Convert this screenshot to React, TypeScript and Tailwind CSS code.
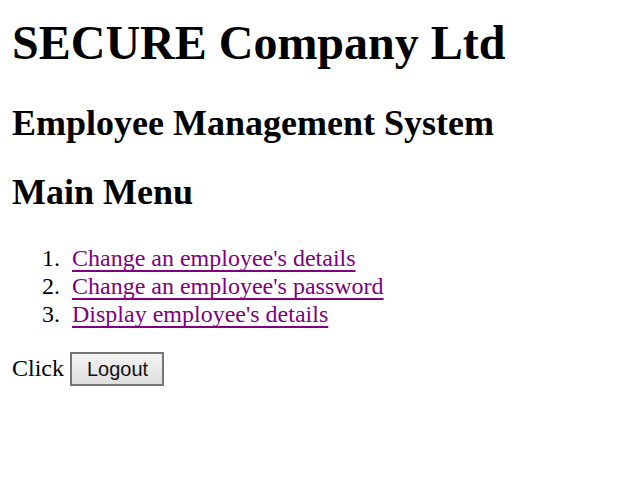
export default function App() {
  const links = [
    "Change an employee's details",
    "Change an employee's password",
    "Display employee's details",
  ];
  return (
    <div
      className="bg-white text-black min-h-[486px] px-[12px] pt-[15px]"
      style={{ fontFamily: '"Liberation Serif", "Times New Roman", serif' }}
    >
      <h1 className="text-[48px] font-bold leading-[55px]">SECURE Company Ltd</h1>
      <h2 className="mt-[33px] text-[36px] font-bold leading-[41px]">Employee Management System</h2>
      <h2 className="mt-[28px] text-[36px] font-bold leading-[41px]">Main Menu</h2>
      <ol className="mt-[31px] list-none text-[24px] leading-[28px]">
        {links.map((t, i) => (
          <li key={t} className="flex">
            <span className="w-[60px] shrink-0 pr-[12px] text-right">{i + 1}.</span>
            <a
              href="#"
              className="text-[#800080] underline decoration-2 underline-offset-[4px] [text-decoration-skip-ink:none]"
            >
              {t}
            </a>
          </li>
        ))}
      </ol>
      <div className="mt-[24px] flex items-baseline text-[24px] leading-[28px]">
        <span>Click</span>
        <button
          type="button"
          className="ml-[6px] border-2 border-[#767676] bg-gradient-to-b from-[#f4f4f4] to-[#dedede] pl-[15px] pr-[14px] py-[3px] text-[20px] leading-[24px] text-[#111]"
          style={{ fontFamily: '"Liberation Sans", Arial, sans-serif' }}
        >
          Logout
        </button>
      </div>
    </div>
  );
}
